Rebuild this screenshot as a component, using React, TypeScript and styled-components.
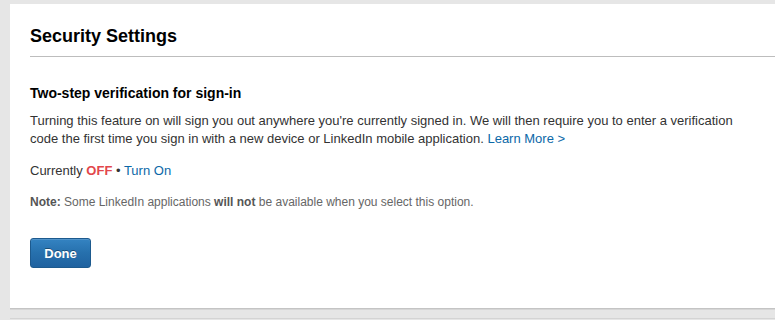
import React from 'react';
import styled, { createGlobalStyle } from 'styled-components';

const GlobalStyle = createGlobalStyle`
  html, body {
    margin: 0;
    padding: 0;
    background: #e6e6e6;
  }
  body {
    font-family: "Liberation Sans", Arial, Helvetica, sans-serif;
    color: #333;
  }
`;

const Page = styled.div`
  padding: 4px 0 0 10px;
  height: 320px;
  box-sizing: border-box;
  overflow: hidden;
`;

const Card = styled.section`
  background: #fff;
  height: 305px;
  box-sizing: border-box;
  padding: 0 0 0 20px;
  border-bottom: 1px solid #c4c4c4;
  box-shadow: 0 1px 0 #d6d6d6;
`;

const NextCard = styled.div`
  margin-top: 9px;
  height: 20px;
  border-top: 1px solid #d4d4d4;
`;

const Header = styled.header`
  padding: 21px 0 9px;
  border-bottom: 1px solid #bdbdbd;
`;

const Title = styled.h1`
  margin: 0;
  font-size: 18px;
  line-height: 22px;
  font-weight: bold;
  color: #000;
`;

const Content = styled.div`
  padding-top: 27px;
  max-width: 720px;
`;

const Heading = styled.h2`
  margin: 0 0 10px;
  font-size: 14px;
  line-height: 18px;
  font-weight: bold;
  color: #000;
`;

const Text = styled.p<{ $gap?: number }>`
  margin: 0 0 ${(p) => p.$gap ?? 14}px;
  font-size: 13px;
  line-height: 18px;
  color: #333;
`;

const Note = styled.p`
  margin: 0 0 28px;
  font-size: 12px;
  line-height: 16px;
  color: #666;

  strong {
    font-weight: bold;
    color: #555;
  }
`;

const Link = styled.a`
  color: #0b68a8;
  text-decoration: none;
  cursor: pointer;
`;

const Status = styled.strong`
  color: #e2474c;
  font-weight: bold;
`;

const DoneButton = styled.button`
  display: block;
  width: 61px;
  height: 30px;
  padding: 0;
  border: 1px solid #1d5a8e;
  border-radius: 3px;
  background: linear-gradient(to bottom, #3483c2 0%, #2670ad 50%, #1f62a0 100%);
  box-shadow: inset 0 1px 0 rgba(255, 255, 255, 0.15);
  color: #fff;
  font-family: "Liberation Sans", Arial, sans-serif;
  font-size: 13px;
  font-weight: bold;
  text-shadow: 0 -1px 0 rgba(0, 0, 0, 0.35);
  cursor: pointer;
`;

export default function App() {
  return (
    <>
      <GlobalStyle />
      <Page>
        <Card>
          <Header>
            <Title>Security Settings</Title>
          </Header>
          <Content>
            <Heading>Two-step verification for sign-in</Heading>
            <Text>
              Turning this feature on will sign you out anywhere you're currently signed in. We will then
              require you to enter a verification code the first time you sign in with a new device or
              LinkedIn mobile application. <Link>Learn More &gt;</Link>
            </Text>
            <Text>
              Currently <Status>OFF</Status> &bull; <Link>Turn On</Link>
            </Text>
            <Note>
              <strong>Note:</strong> Some LinkedIn applications <strong>will not</strong> be available when
              you select this option.
            </Note>
            <DoneButton>Done</DoneButton>
          </Content>
        </Card>
        <NextCard />
      </Page>
    </>
  );
}
